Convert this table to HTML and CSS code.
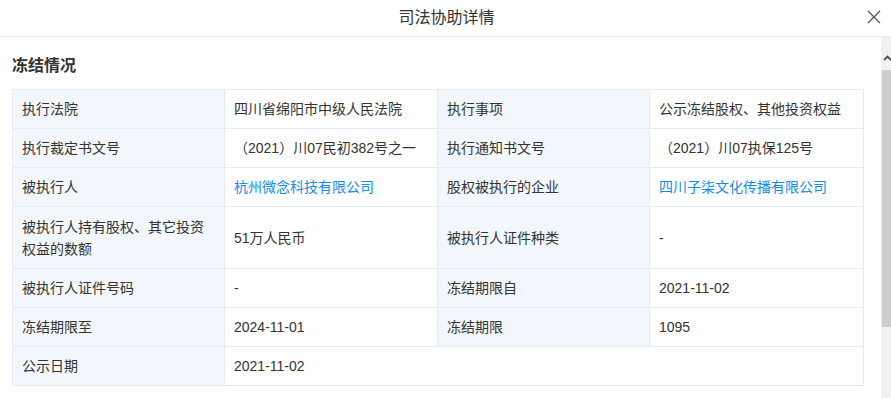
FILE: index.html
```html
<!DOCTYPE html>
<html lang="zh-CN">
<head>
<meta charset="utf-8">
<title>司法协助详情</title>
<link rel="stylesheet" href="styles.css">
</head>
<body>
<div class="dialog">
  <header class="dlg-head">
    <span class="dlg-title">司法协助详情</span>
    <button class="dlg-close" aria-label="关闭">
      <svg width="14" height="14" viewBox="0 0 14 14"><path d="M1 1L13 13M13 1L1 13" stroke="#555" stroke-width="1.3" fill="none"/></svg>
    </button>
  </header>
  <div class="dlg-main">
    <div class="dlg-body">
      <h2 class="sec-title">冻结情况</h2>
      <table class="info">
        <colgroup><col class="c1"><col class="c2"><col class="c3"><col class="c4"></colgroup>
        <tr><td class="lb">执行法院</td><td>四川省绵阳市中级人民法院</td><td class="lb">执行事项</td><td>公示冻结股权、其他投资权益</td></tr>
        <tr><td class="lb">执行裁定书文号</td><td>（2021）川07民初382号之一</td><td class="lb">执行通知书文号</td><td>（2021）川07执保125号</td></tr>
        <tr><td class="lb">被执行人</td><td><a class="lnk">杭州微念科技有限公司</a></td><td class="lb">股权被执行的企业</td><td><a class="lnk">四川子柒文化传播有限公司</a></td></tr>
        <tr class="tall"><td class="lb">被执行人持有股权、其它投资权益的数额</td><td>51万人民币</td><td class="lb">被执行人证件种类</td><td>-</td></tr>
        <tr><td class="lb">被执行人证件号码</td><td>-</td><td class="lb">冻结期限自</td><td>2021-11-02</td></tr>
        <tr><td class="lb">冻结期限至</td><td>2024-11-01</td><td class="lb">冻结期限</td><td>1095</td></tr>
        <tr><td class="lb">公示日期</td><td colspan="3">2021-11-02</td></tr>
      </table>
    </div>
    <div class="sbar">
      <div class="sbar-btn"><svg width="9" height="6" viewBox="0 0 9 6"><path d="M1 5L4.5 1.5L8 5" stroke="#505050" stroke-width="1.8" fill="none"/></svg></div>
      <div class="sbar-thumb"></div>
    </div>
  </div>
</div>
</body>
</html>
```
FILE: styles.css
```css
html, body {
  margin: 0;
  padding: 0;
  background: #fff;
}
body {
  font-family: "Liberation Sans", "Noto Sans CJK SC", sans-serif;
  color: #333;
  width: 891px;
  height: 398px;
  overflow: hidden;
}
.dialog {
  display: flex;
  flex-direction: column;
  height: 398px;
}
.dlg-head {
  position: relative;
  height: 36px;
  border-bottom: 1px solid #ececec;
  display: flex;
  align-items: center;
  justify-content: center;
  flex: none;
}
.dlg-title {
  font-size: 16px;
  color: #333;
  line-height: 20px;
  margin-left: 2px;
}
.dlg-close {
  position: absolute;
  right: 10px;
  top: 10px;
  width: 14px;
  height: 14px;
  padding: 0;
  border: 0;
  background: none;
  display: block;
}
.dlg-close svg { display: block; }
.dlg-main {
  flex: 1;
  display: flex;
  min-height: 0;
}
.dlg-body {
  flex: 1;
  padding: 0 17px 0 12px;
}
.sec-title {
  margin: 17px 0 11px;
  font-size: 16px;
  line-height: 24px;
  font-weight: bold;
  color: #333;
}
.info {
  border-collapse: collapse;
  width: 851px;
  table-layout: fixed;
  font-size: 14px;
  line-height: 22px;
}
.c1 { width: 212px; }
.c2 { width: 213px; }
.c3 { width: 212px; }
.c4 { width: 214px; }
.info td {
  border: 1px solid #e6ebf1;
  height: 39px;
  padding: 0 9px;
  vertical-align: middle;
  color: #333;
  box-sizing: border-box;
}
.info tr.tall td {
  height: 62px;
  padding-top: 8px;
  padding-bottom: 8px;
}
.info td.lb {
  background: #f2f7fd;
}
.lnk {
  color: #128bed;
  text-decoration: none;
}
.sbar {
  width: 12px;
  flex: none;
  background: #f1f1f1;
  display: flex;
  flex-direction: column;
}
.sbar-btn {
  height: 33px;
  display: flex;
  align-items: flex-end;
  justify-content: center;
  padding-bottom: 9px;
  box-sizing: border-box;
}
.sbar-btn svg { display: block; }
.sbar-thumb {
  height: 257px;
  background: #cdcdcd;
  margin-left: 1px;
}
```
